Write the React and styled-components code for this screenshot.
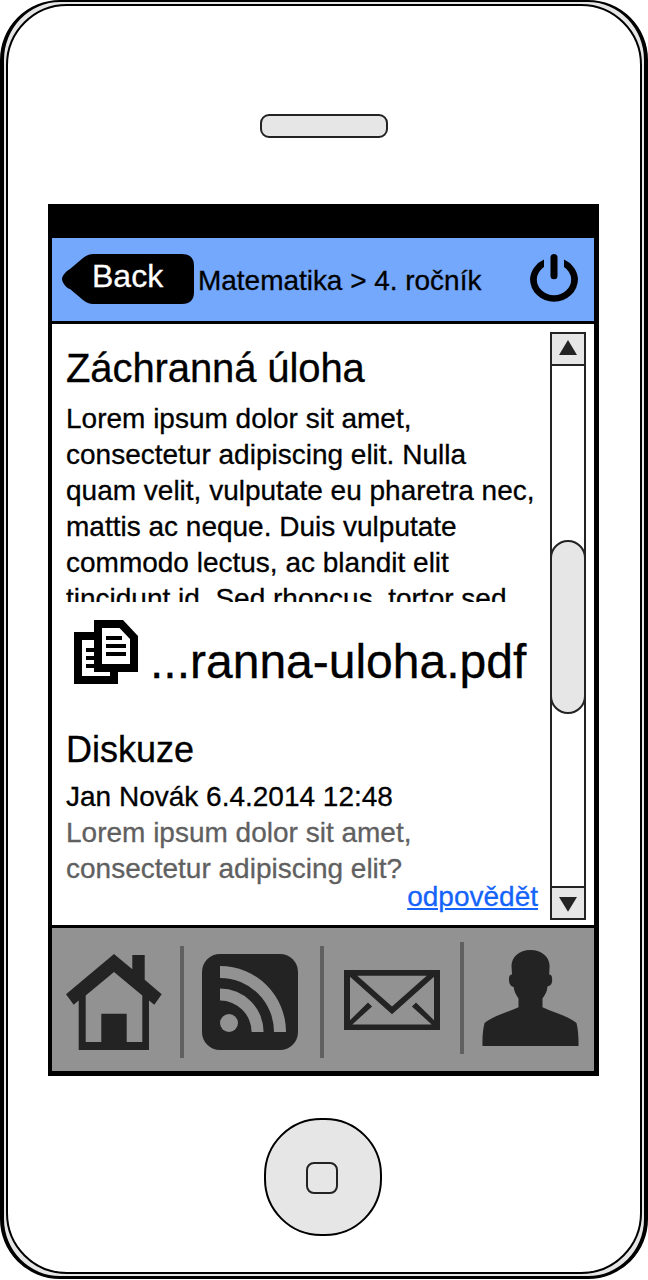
import React from "react";
import styled, { createGlobalStyle } from "styled-components";

const ink = "#232323";
const panel = "#e6e6e6";
const barGrey = "#929292";

const GlobalStyle = createGlobalStyle`
  * { box-sizing: border-box; }
  body {
    margin: 0;
    background: #fff;
    color: #000;
    font-family: "Liberation Sans", Arial, sans-serif;
    -webkit-text-stroke: 0.3px currentColor;
  }
  svg { display: block; }
  button { font: inherit; border: 0; padding: 0; background: none; }
`;

const PhoneShell = styled.div`
  width: 648px;
  height: 1279px;
  padding: 2px;
  border: 0 solid #000;
  border-width: 2px 4px 3px;
  border-radius: 60px;
  background: ${panel};
`;

const PhoneFace = styled.div`
  height: 100%;
  border: 2px solid #000;
  border-radius: 61px;
  background: #fff;
  display: flex;
  flex-direction: column;
  align-items: center;
  padding-top: 108px;
`;

const Speaker = styled.div`
  width: 128px;
  height: 24px;
  border: 2px solid ${ink};
  border-radius: 9px;
  background: ${panel};
`;

const Screen = styled.main`
  width: 551px;
  height: 872px;
  margin: 66px 0 42px -1px;
  border: solid #000;
  border-width: 34px 5px 5px 4px;
  display: flex;
  flex-direction: column;
`;

const Header = styled.header`
  height: 86px;
  padding: 16px 16px 0 10px;
  border-bottom: 3px solid #000;
  background: #74a8fc;
  display: flex;
  align-items: flex-start;
`;

const BackButton = styled.button`
  position: relative;
  width: 132px;
  height: 50px;
  padding: 0 0 6px 30px;
  color: #fff;
  font-size: 32px;
  line-height: 44px;
  text-align: left;
`;

const BackShape = styled.svg`
  position: absolute;
  inset: 0;
`;

const BackLabel = styled.span`
  position: relative;
`;

const Title = styled.h1`
  flex: 1;
  margin: 9px 0 0 4px;
  font-size: 28px;
  font-weight: 400;
  line-height: 36px;
  letter-spacing: -0.03px;
  white-space: nowrap;
`;

const Content = styled.section`
  height: 601px;
  padding: 8px 8px 0 14px;
  display: flex;
  justify-content: space-between;
`;

const Article = styled.article`
  width: 474px;
  padding-top: 13px;
  display: flex;
  flex-direction: column;
`;

const Heading = styled.h2`
  margin: 0;
  font-weight: 400;
  font-size: ${(p) => p.$size}px;
  line-height: ${(p) => p.$line}px;
  letter-spacing: ${(p) => (p.$size > 36 ? "-0.1px" : "0")};
  white-space: nowrap;
`;

const Excerpt = styled.p`
  height: 201px;
  margin: 10px 0 0;
  overflow: hidden;
  font-size: 28px;
  line-height: 36px;
  white-space: nowrap;
`;

const Attachment = styled.div`
  height: 64px;
  margin: 18px 0 45px;
  padding-left: 8px;
  display: flex;
  gap: 12px;
`;

const FileName = styled.span`
  padding-top: 14px;
  font-size: 48px;
  line-height: 56px;
  white-space: nowrap;
`;

const Comment = styled.p`
  margin: ${(p) => (p.$first ? 8 : 0)}px 0 0;
  color: ${(p) => (p.$muted ? "#606060" : "#000")};
  font-size: 28px;
  line-height: 36px;
  white-space: nowrap;
`;

const ReplyLink = styled.a`
  align-self: flex-end;
  margin: -8px 2px 0 0;
  color: #1463fb;
  font-size: 28px;
  line-height: 36px;
  text-decoration: underline;
  text-decoration-thickness: 2px;
  text-underline-offset: 2px;
`;

const ScrollTrack = styled.div`
  width: 36px;
  height: 588px;
  border: 2px solid ${ink};
  display: flex;
  flex-direction: column;
  align-items: center;
`;

const ScrollArrow = styled.button`
  width: 32px;
  height: 32px;
  background: ${panel};
  border: 0 solid ${ink};
  border-bottom-width: ${(p) => (p.$up ? 2 : 0)}px;
  border-top-width: ${(p) => (p.$up ? 0 : 2)}px;
`;

const ScrollThumb = styled.div`
  width: 36px;
  height: 174px;
  margin: 174px 0 172px;
  flex: none;
  border: 2px solid ${ink};
  border-radius: 18px;
  background: ${panel};
`;

const TabBar = styled.nav`
  height: 146px;
  border-top: 3px solid #000;
  padding-left: 14px;
  background: ${barGrey};
  display: flex;
  align-items: flex-start;
`;

const Tab = styled.button`
  flex: none;
  width: 96px;
  margin-top: ${(p) => p.$top}px;
  color: ${ink};
`;

const Divider = styled.span`
  flex: none;
  width: 4px;
  height: 112px;
  margin: ${(p) => p.$top}px ${(p) => p.$after}px 0 ${(p) => p.$before}px;
  background: #606060;
`;

const HomeButton = styled.button`
  width: 118px;
  height: 118px;
  margin-left: -2px;
  border: 2px solid #000;
  border-radius: 57px;
  background: ${panel};
  display: flex;
  align-items: center;
  justify-content: center;
  padding: 2px 2px 0 0;
`;

const HomeMark = styled.span`
  width: 32px;
  height: 32px;
  border: 2px solid ${ink};
  border-radius: 8px;
`;

const PowerIcon = () => (
  <svg width="48" height="48" viewBox="0 0 48 48">
    <path
      fill="#000"
      fillRule="evenodd"
      d="M14 5.6V13A17.2 16 0 0 0 6.8 25.4A17.2 15.8 0 0 0 41.2 25.4A17.2 16 0 0 0 34 13V5.6A24 23 0 0 1 48 25A24 22.8 0 0 1 0 25A24 23 0 0 1 14 5.6Z"
    />
    <path d="M24 3.6V21.8" stroke="#000" strokeWidth="7" strokeLinecap="round" />
  </svg>
);

const FilesIcon = () => (
  <svg width="64" height="64" viewBox="0 0 64 64">
    <path d="M0 12H20V52H44V64H0Z" />
    <path fill="#fff" d="M8 20H20V52H36V56H8Z" />
    <path d="M12 28h8v4h-8zM12 36h8v4h-8zM12 44h8v4h-8z" />
    <path d="M20 0H49L64 16V52H20Z" />
    <path fill="#fff" d="M28 8H45.5L56 19V44H28Z" />
    <path d="M32 16h16v4H32zM32 24h20v4H32zM32 32h20v4H32z" />
  </svg>
);

const HouseIcon = () => (
  <svg width="96" height="96" viewBox="0 0 96 96" fill="currentColor">
    <path
      fillRule="evenodd"
      d="M48 0L66.3 15.3V1H78.7V25.8L95.7 40.2L88.3 50.8L83 46.6V96H12.7V46.6L7.7 50.8L0 40.2ZM48 18L19.7 41.5V88H35.3V59.7H60.7V88H76.3V41.5Z"
    />
  </svg>
);

const FeedIcon = () => (
  <svg width="96" height="96" viewBox="0 0 96 96">
    <rect width="96" height="96" rx="18" fill={ink} />
    <g fill={barGrey}>
      <circle cx="27" cy="69" r="9" />
      <path d="M18 12A66 66 0 0 1 84 78H72A54 54 0 0 0 18 24Z" />
      <path d="M18 34.6A43.5 43.5 0 0 1 61.6 78H49.6A31.5 31.5 0 0 0 18 46.6Z" />
    </g>
  </svg>
);

const MailIcon = () => (
  <svg width="96" height="60" viewBox="0 0 96 60">
    <rect width="96" height="60" fill={ink} />
    <g fill={barGrey}>
      <path d="M13.3 5.7H82.7L48 36.6Z" />
      <path d="M6 6.7L48 44.3L90 6.7V50.2L72 32.6L67.9 36.5L87.7 54.4H8.3L28.1 36.5L24 32.6L6 50.2Z" />
    </g>
  </svg>
);

const PersonIcon = () => (
  <svg width="97" height="96" viewBox="0 0 97 96" fill="currentColor">
    <path d="M48.5 0C60 0 67.5 7 67.6 16L67.2 24.5C70 24 70.5 28 70 31.5C69.6 35 67.5 36 65.4 36.5C65.2 42 62.5 45.5 60.5 48.5V57.3C73 63 86 66 94.5 73C96 79 96.7 87 96.5 96H.5C.2 87 1 79 2.5 73C11 66 24 63 36.5 57.3V48.5C34 45 32 41 31.7 37C29.5 36.5 27.5 35 27.1 31.5C26.7 28 27 24 30 24.5L29.5 16C29.6 7 37 0 48.5 0Z" />
  </svg>
);

const Arrow = ({ up }) => (
  <svg width="32" height="30" viewBox="0 0 32 30">
    <path fill={ink} d={up ? "M16 6L25 21H7Z" : "M7 9H25L16 23.8Z"} />
  </svg>
);

export default function App() {
  return (
    <>
      <GlobalStyle />
      <PhoneShell>
        <PhoneFace>
          <Speaker />
          <Screen>
            <Header>
              <BackButton>
                <BackShape width="132" height="50" viewBox="0 0 132 50">
                  <path d="M31 0H120Q132 0 132 12V38Q132 50 120 50H31Q26 50 21 46L8 35C4 34 0 28 0 25S4 17 8 15L21 4Q26 0 31 0Z" />
                </BackShape>
                <BackLabel>Back</BackLabel>
              </BackButton>
              <Title>Matematika &gt; 4. ročník</Title>
              <PowerIcon />
            </Header>
            <Content>
              <Article>
                <Heading $size={40} $line={46}>Záchranná úloha</Heading>
                <Excerpt>
                  Lorem ipsum dolor sit amet,<br />
                  consectetur adipiscing elit. Nulla<br />
                  quam velit, vulputate eu pharetra nec,<br />
                  mattis ac neque. Duis vulputate<br />
                  commodo lectus, ac blandit elit<br />
                  tincidunt id. Sed rhoncus, tortor sed
                </Excerpt>
                <Attachment>
                  <FilesIcon />
                  <FileName>...ranna-uloha.pdf</FileName>
                </Attachment>
                <Heading $size={36} $line={42}>Diskuze</Heading>
                <Comment $first>Jan Novák 6.4.2014 12:48</Comment>
                <Comment $muted>
                  Lorem ipsum dolor sit amet,<br />
                  consectetur adipiscing elit?
                </Comment>
                <ReplyLink>odpovědět</ReplyLink>
              </Article>
              <ScrollTrack>
                <ScrollArrow $up><Arrow up /></ScrollArrow>
                <ScrollThumb />
                <ScrollArrow><Arrow /></ScrollArrow>
              </ScrollTrack>
            </Content>
            <TabBar>
              <Tab $top={26}><HouseIcon /></Tab>
              <Divider $top={18} $before={18} $after={18} />
              <Tab $top={26}><FeedIcon /></Tab>
              <Divider $top={18} $before={22} $after={20} />
              <Tab $top={42}><MailIcon /></Tab>
              <Divider $top={14} $before={20} $after={18} />
              <Tab $top={22}><PersonIcon /></Tab>
            </TabBar>
          </Screen>
          <HomeButton><HomeMark /></HomeButton>
        </PhoneFace>
      </PhoneShell>
    </>
  );
}
